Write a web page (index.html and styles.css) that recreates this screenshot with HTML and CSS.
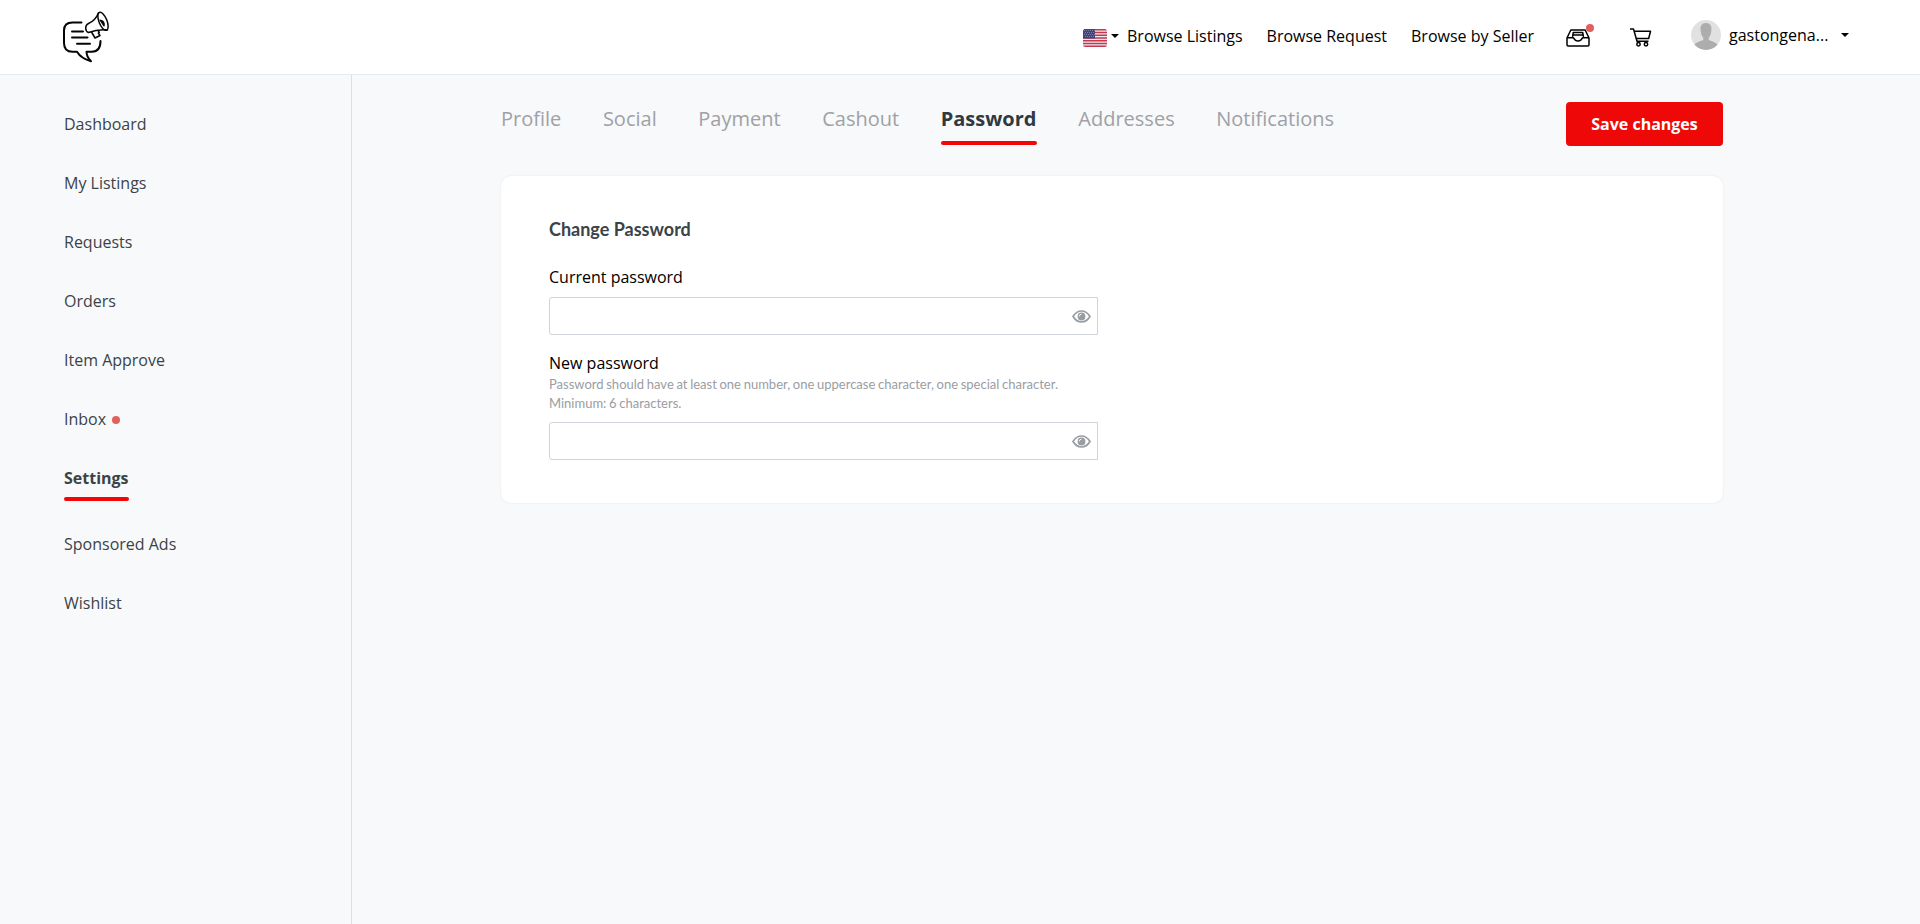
FILE: index.html
```html
<!DOCTYPE html>
<html lang="en">
<head>
<meta charset="utf-8">
<title>Change Password</title>
<link rel="stylesheet" href="styles.css">
</head>
<body>
<header class="topbar">
  <a class="logo"><svg width="50" height="54" viewBox="0 0 50 54" fill="none" stroke="#050505" stroke-linecap="round" stroke-linejoin="round">
    <path stroke-width="2" d="M20.500 12.500H11.500Q3 12.500 3 20.500V33Q3 41.800 11.500 41.800H16Q20 48.500 30 51.300Q25.500 47 25.500 41.800H31Q39.500 41.500 39.500 31"/>
    <path stroke-width="2" d="M11 21.500h11M11 27.500h15.500M16 33.700h13"/>
    <path stroke-width="1.500" d="M37.500 2.800C35.500 8 32.500 11.500 27.500 13.500C23.500 15.500 24 21 27.500 22.500C33 20.500 40 19.500 46.500 20M30.500 22l3.500 6 5-2.500-1.700-2.500 1-.7-1.300-2"/>
    <ellipse stroke-width="1.500" cx="42" cy="11.300" rx="4" ry="9.600" transform="rotate(-22 42 11.300)"/>
    <path stroke-width="1.200" d="M39 10Q44 10.500 43 16Z" fill="#050505"/>
  </svg></a>
  <nav class="topnav">
    <span class="lang">
      <svg width="24" height="18" viewBox="0 0 24 18"><defs><clipPath id="flag"><rect width="24" height="18" rx="2.500"/></clipPath></defs><g clip-path="url(#flag)"><rect width="24" height="18" fill="#f1e9ec"/><path d="M0 .7h24M0 3.460h24M0 6.230h24M0 9h24M0 11.770h24M0 14.540h24M0 17.300h24" stroke="#c23a50" stroke-width="1.400"/><rect width="12" height="9.500" fill="#43437c"/><path d="M1 1.500h11M2 3.500h10M1 5.500h11M2 7.500h10" stroke="#8c8cb2" stroke-width=".8" stroke-dasharray="1 1"/></g></svg>
      <i class="caret"></i>
    </span>
    <a class="link">Browse Listings</a>
    <a class="link">Browse Request</a>
    <a class="link">Browse by Seller</a>
    <a class="tray"><svg width="24" height="18" viewBox="0 0 24 18" fill="none" stroke="#000" stroke-width="1.500" stroke-linejoin="round"><path d="M1 9 4.800 1H19.200L23 9V15.800Q23 17 21.800 17H2.200Q1 17 1 15.800ZM1 8.700H7.300C8 8.700 8 12 12 12S16 8.700 16.700 8.700H23"/><path d="M6.500 7.800 7.300 3.500H16.700L17.500 7.800M7.500 6H16.500"/></svg><i class="badge"></i></a>
    <a class="cart"><svg width="22" height="19" viewBox="0 0 22 19" fill="none" stroke="#000" stroke-width="1.500" stroke-linejoin="round"><path d="M0 1H3.500L7 13.200H18.500M4.300 3.300H20.500L18.700 10.500H6.300"/><circle cx="8.500" cy="16.200" r="1.700"/><circle cx="16" cy="16.200" r="1.700"/></svg></a>
    <svg class="avatar" width="30" height="30" viewBox="0 0 30 30"><defs><clipPath id="face"><circle cx="15" cy="15" r="15"/></clipPath></defs><g clip-path="url(#face)"><path fill="#e1e1e1" d="M0 0h30v30H0z"/><path fill="#adadad" d="M15 3C10.500 3 9 6.500 9.700 11C10 14 11 16.500 12.300 17.800V20C9 21.500 4 22 2 27V30H28V27C26 22 21 21.500 17.700 20V17.800C19 16.500 20 14 20.300 11C21 6.500 19.500 3 15 3Z"/></g></svg>
    <span class="user">gastongena...</span>
    <i class="caret user-caret"></i>
  </nav>
</header>
<div class="layout">
  <aside class="sidebar">
    <a>Dashboard</a>
    <a>My Listings</a>
    <a>Requests</a>
    <a>Orders</a>
    <a>Item Approve</a>
    <a>Inbox<i class="dot"></i></a>
    <a class="current">Settings</a>
    <a>Sponsored Ads</a>
    <a>Wishlist</a>
  </aside>
  <main class="content">
    <div class="toolbar">
      <nav class="tabs">
        <a>Profile</a><a>Social</a><a>Payment</a><a>Cashout</a><a class="active">Password</a><a>Addresses</a><a>Notifications</a>
      </nav>
      <button class="save">Save changes</button>
    </div>
    <section class="card">
      <h2>Change Password</h2>
      <label>Current password</label>
      <div class="field"><svg width="19" height="13" viewBox="0 0 19 13"><path d="M1 6.500Q4.500 1 9.500 1T18 6.500Q14.500 12 9.500 12T1 6.500Z" fill="none" stroke="#999ca1" stroke-width="1.700"/><circle cx="9.500" cy="6.500" r="3.900" fill="#999ca1"/><path d="M7.300 6.300Q7.400 4.300 9.400 4.200" fill="none" stroke="#fff" stroke-width="1"/></svg></div>
      <label>New password</label>
      <p class="hint">Password should have at least one number, one uppercase character, one special character.<br>Minimum: 6 characters.</p>
      <div class="field"><svg width="19" height="13" viewBox="0 0 19 13"><path d="M1 6.500Q4.500 1 9.500 1T18 6.500Q14.500 12 9.500 12T1 6.500Z" fill="none" stroke="#999ca1" stroke-width="1.700"/><circle cx="9.500" cy="6.500" r="3.900" fill="#999ca1"/><path d="M7.300 6.300Q7.400 4.300 9.400 4.200" fill="none" stroke="#fff" stroke-width="1"/></svg></div>
    </section>
  </main>
</div>
</body>
</html>
```
FILE: styles.css
```css
* { box-sizing: border-box; }
body {
  margin: 0;
  height: 100vh;
  display: flex;
  flex-direction: column;
  background: #f8f9fb;
  font: 16px/24px "Open Sans", sans-serif;
  color: #000;
}
svg { display: block; flex: none; }
.topbar {
  flex: none;
  height: 75px;
  display: flex;
  justify-content: space-between;
  padding: 0 71px 0 61px;
  background: #fff;
  border-bottom: 1px solid #e6e9ed;
}
.logo { padding-top: 10px; }
.topnav { display: flex; align-items: flex-start; white-space: nowrap; }
.lang { display: flex; gap: 4px; padding-top: 29px; margin-right: 8px; }
.caret {
  width: 0;
  height: 0;
  border: 4px solid transparent;
  border-top-color: #000;
  border-bottom: 0;
}
.lang .caret { margin-top: 5px; }
.link { margin: 24px 24px 0 0; }
.tray { position: relative; margin: 29px 0 0 8px; }
.badge {
  position: absolute;
  left: 20px;
  top: -5px;
  width: 8px;
  height: 8px;
  border-radius: 50%;
  background: #e06060;
}
.cart { margin: 28px 0 0 40px; }
.avatar { margin: 20px 8px 0 39px; }
.user { margin-top: 23px; width: 112px; }
.user-caret { margin-top: 33px; }
.layout { flex: 1; display: flex; }
.sidebar {
  width: 352px;
  border-right: 1px solid #dddfe8;
  padding: 37px 0 0 64px;
  display: flex;
  flex-direction: column;
  align-items: flex-start;
  gap: 35px;
  color: #3b4348;
}
.sidebar a { display: flex; align-items: center; }
.dot {
  width: 8px;
  height: 8px;
  margin: 2px 0 0 6px;
  border-radius: 50%;
  background: #e06060;
}
.sidebar .current {
  flex-direction: column;
  align-items: stretch;
  font-weight: 700;
  width: 65px;
  margin-bottom: -4px;
}
.current::after, .active::after {
  content: "";
  display: block;
  height: 4px;
  margin-top: 7px;
  border-radius: 2px;
  background: #f40606;
}
.content { width: 1371px; padding: 27px 0 0 149px; }
.toolbar { display: flex; justify-content: space-between; height: 74px; }
.tabs {
  display: flex;
  gap: 41.6px;
  padding-top: 2px;
  font-size: 20px;
  line-height: 30px;
  color: #9ea1a6;
}
.active { width: 96px; font-weight: 700; color: #30393f; }
.save {
  width: 157px;
  height: 44px;
  padding: 0;
  border: 0;
  border-radius: 4px;
  background: #ef0808;
  color: #fff;
  font: 700 16px/24px "Open Sans", sans-serif;
}
.card {
  height: 327px;
  padding: 41px 48px 0;
  border-radius: 10px;
  background: #fff;
  box-shadow: 0 0 2px rgba(0, 0, 0, .1);
}
h2 { margin: 0 0 24px; font: 700 18px/24px Lato, sans-serif; color: #3b4348; }
label { display: block; }
.field {
  width: 549px;
  height: 38px;
  margin: 8px 0 16px;
  padding-right: 6px;
  display: flex;
  align-items: center;
  justify-content: flex-end;
  border: 1px solid #ced4da;
  border-radius: 3px 0 0 3px;
}
.hint {
  margin: 0 0 9px;
  font: 13px/19px Lato, sans-serif;
  word-spacing: -.65px;
  color: #9a9da3;
  white-space: nowrap;
}
```
